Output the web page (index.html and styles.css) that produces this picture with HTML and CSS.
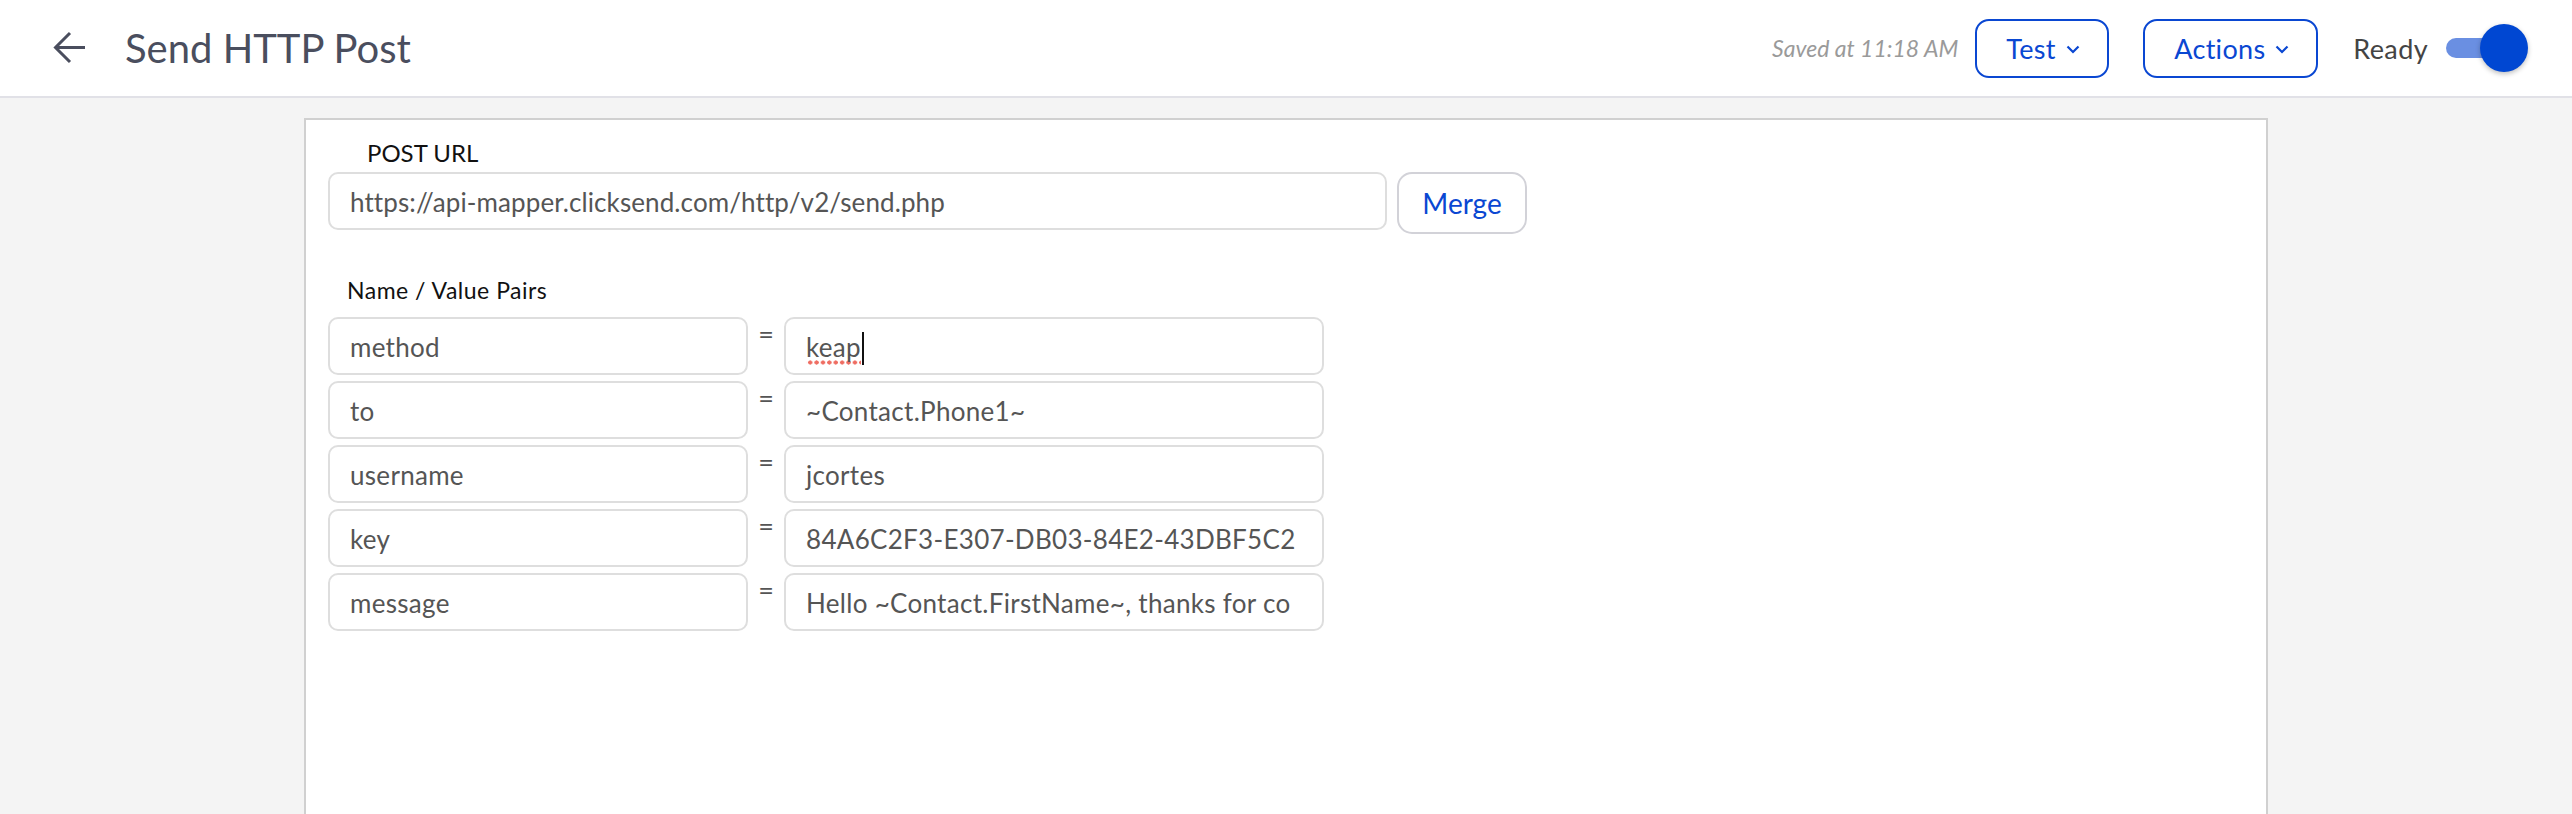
FILE: index.html
```html
<!DOCTYPE html>
<html lang="en">
<head>
<meta charset="utf-8">
<title>Send HTTP Post</title>
<link rel="stylesheet" href="styles.css">
</head>
<body>
<header class="topbar">
  <div class="topbar-left">
    <button class="back" aria-label="Back">
      <svg width="34" height="34" viewBox="0 0 34 34"><path d="M32 16.5H3M17 2L2.5 16.5L17 31" fill="none" stroke="#4a4e5e" stroke-width="3"/></svg>
    </button>
    <h1 class="title">Send HTTP Post</h1>
  </div>
  <div class="topbar-right">
    <span class="saved">Saved at 11:18 AM</span>
    <button class="btn-outline btn-test">Test <svg class="chev" width="14" height="9" viewBox="0 0 14 9"><path d="M1.5 1.5L7 7l5.5-5.5" fill="none" stroke="#0a47d2" stroke-width="2.2"/></svg></button>
    <button class="btn-outline btn-actions">Actions <svg class="chev" width="14" height="9" viewBox="0 0 14 9"><path d="M1.5 1.5L7 7l5.5-5.5" fill="none" stroke="#0a47d2" stroke-width="2.2"/></svg></button>
    <span class="ready">Ready</span>
    <span class="toggle"><span class="track"></span><span class="knob"></span></span>
  </div>
</header>
<main class="page">
  <section class="card">
    <div class="url-label">POST URL</div>
    <div class="url-row">
      <div class="field url-field">https://api-mapper.clicksend.com/http/v2/send.php</div>
      <button class="merge">Merge</button>
    </div>
    <div class="pairs-label">Name / Value Pairs</div>
    <div class="pairs">
      <div class="pair">
        <div class="field name">method</div>
        <span class="eq">=</span>
        <div class="field value"><span class="misspelled">keap</span><span class="caret"></span></div>
      </div>
      <div class="pair">
        <div class="field name">to</div>
        <span class="eq">=</span>
        <div class="field value">~Contact.Phone1~</div>
      </div>
      <div class="pair">
        <div class="field name">username</div>
        <span class="eq">=</span>
        <div class="field value">jcortes</div>
      </div>
      <div class="pair">
        <div class="field name">key</div>
        <span class="eq">=</span>
        <div class="field value">84A6C2F3-E307-DB03-84E2-43DBF5C2</div>
      </div>
      <div class="pair">
        <div class="field name">message</div>
        <span class="eq">=</span>
        <div class="field value">Hello ~Contact.FirstName~, thanks for co</div>
      </div>
    </div>
  </section>
</main>
</body>
</html>
```

FILE: styles.css
```css
html, body {
  margin: 0;
  padding: 0;
  height: 814px;
  overflow: hidden;
}

body {
  background: #f4f4f4;
  font-family: Lato, "Open Sans", "Liberation Sans", sans-serif;
  color: #111;
}

.topbar {
  height: 96px;
  background: #fff;
  border-bottom: 2px solid #e1e1e7;
  display: flex;
  align-items: center;
  justify-content: space-between;
  padding: 0 44px 0 53px;
}

.topbar-left {
  display: flex;
  align-items: center;
  gap: 38px;
}

.back {
  border: 0;
  background: none;
  padding: 0;
  width: 34px;
  height: 34px;
  display: flex;
  align-items: center;
  justify-content: center;
  cursor: pointer;
}

.title {
  margin: 0;
  font-size: 40px;
  font-weight: 400;
  color: #4a4e5e;
  letter-spacing: 0;
}

.topbar-right {
  display: flex;
  align-items: center;
}

.saved {
  font-size: 23px;
  font-style: italic;
  color: #9a9a9a;
  margin-right: 17px;
}

.btn-outline {
  box-sizing: border-box;
  height: 59px;
  border: 2px solid #0a47d2;
  border-radius: 14px;
  background: #fff;
  color: #0a47d2;
  font-family: Lato, "Open Sans", "Liberation Sans", sans-serif;
  font-size: 27px;
  letter-spacing: 0.3px;
  display: flex;
  align-items: center;
  gap: 10px;
  padding: 0 0 0 29px;
}

.btn-test {
  width: 134px;
}

.btn-actions {
  width: 175px;
  margin-left: 34px;
}

.chev {
  margin-top: 2px;
}

.ready {
  font-size: 27px;
  letter-spacing: 0.4px;
  color: #444;
  margin-left: 35px;
  margin-right: 18px;
}

.toggle {
  position: relative;
  width: 82px;
  height: 48px;
  display: inline-block;
}

.track {
  position: absolute;
  left: 0;
  top: 14px;
  width: 60px;
  height: 20px;
  border-radius: 10px;
  background: #6a8fe2;
}

.knob {
  position: absolute;
  right: 0;
  top: 0;
  width: 48px;
  height: 48px;
  border-radius: 50%;
  background: #0047d2;
  box-shadow: 0 2px 5px rgba(0, 0, 0, 0.25);
}

.page {
  padding-top: 20px;
}

.card {
  box-sizing: border-box;
  width: 1964px;
  height: 720px;
  margin: 0 auto;
  background: #fff;
  border: 2px solid #d0d0d0;
  padding: 19px 22px 0 22px;
}

.url-label {
  font-size: 24px;
  line-height: 28px;
  margin-left: 39px;
  color: #111;
}

.url-row {
  display: flex;
  align-items: flex-start;
  gap: 10px;
  margin-top: 5px;
}

.field {
  box-sizing: border-box;
  height: 58px;
  border: 2px solid #dedede;
  border-radius: 10px;
  background: #fff;
  padding: 2px 18px 0 20px;
  font-size: 26px;
  letter-spacing: 0.3px;
  line-height: 52px;
  color: #555;
  white-space: nowrap;
  overflow: hidden;
}

.url-field {
  width: 1059px;
  letter-spacing: 0.1px;
}

.merge {
  width: 130px;
  height: 62px;
  border: 2px solid #d2d2d8;
  border-radius: 15px;
  background: #fff;
  color: #0a47d2;
  font-family: Lato, "Open Sans", "Liberation Sans", sans-serif;
  font-size: 28px;
  padding: 0;
}

.pairs-label {
  font-size: 23px;
  letter-spacing: 0.5px;
  line-height: 26px;
  margin-top: 43px;
  margin-left: 19px;
  color: #111;
}

.pairs {
  margin-top: 14px;
  display: flex;
  flex-direction: column;
  gap: 6px;
}

.pair {
  display: flex;
  align-items: flex-start;
}

.name {
  width: 420px;
}

.eq {
  width: 36px;
  text-align: center;
  font-size: 27px;
  line-height: 28px;
  padding-top: 3px;
  color: #555;
}

.value {
  width: 540px;
  padding-right: 14px;
}

.misspelled {
  padding-bottom: 2px;
  background-image: radial-gradient(circle at center, #ef6e63 1.9px, transparent 2.3px);
  background-size: 6.4px 5px;
  background-repeat: repeat-x;
  background-position: 1px 100%;
}

.caret {
  display: inline-block;
  width: 2px;
  height: 33px;
  background: #111;
  vertical-align: -8px;
  margin-left: 1px;
}
```
